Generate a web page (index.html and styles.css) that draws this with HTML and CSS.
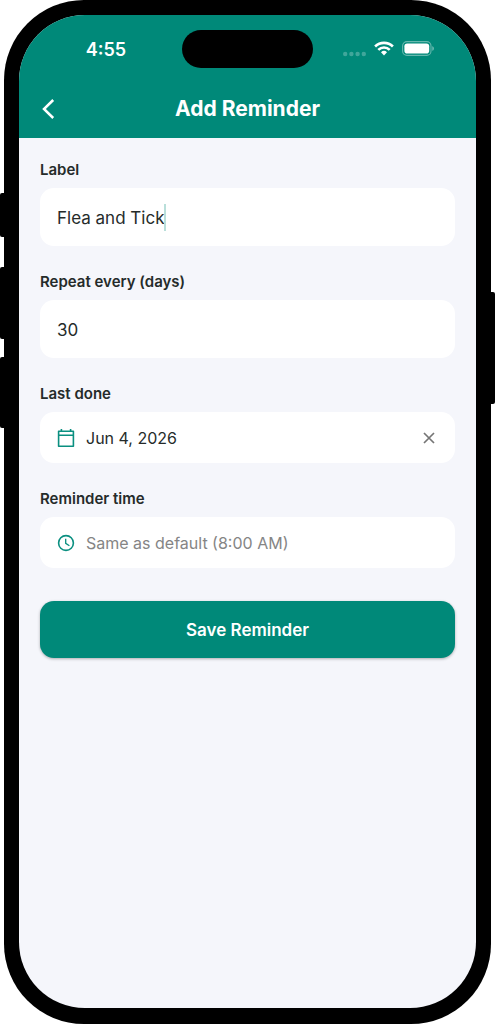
FILE: index.html
```html
<!DOCTYPE html>
<html lang="en">
<head>
<meta charset="utf-8">
<meta name="viewport" content="width=device-width, initial-scale=1">
<title>Add Reminder</title>
<link rel="stylesheet" href="styles.css">
</head>
<body>
<div class="device">
  <span class="side-key key-action"></span>
  <span class="side-key key-up"></span>
  <span class="side-key key-down"></span>
  <span class="side-key key-power"></span>
  <div class="screen">
    <header class="app-header">
      <div class="status-bar">
        <span class="clock">4:55</span>
        <span class="island"></span>
        <span class="indicators">
          <svg class="dots" width="23" height="20" viewBox="0 0 23 20"><g fill="#fff" opacity=".25"><circle cx="2.2" cy="15" r="2.2"/><circle cx="8.4" cy="15" r="2.2"/><circle cx="14.6" cy="15" r="2.2"/><circle cx="20.8" cy="15" r="2.2"/></g></svg>
          <svg width="20" height="20" viewBox="0 0 20 20"><g fill="none" stroke="#fff" stroke-width="2.6"><path d="M1.1 7.5a12.7 12.7 0 0 1 17.8 0"/><path d="M4.3 10.8a8.1 8.1 0 0 1 11.4 0"/></g><path fill="#fff" d="M7 13.2a4.5 4.5 0 0 1 6 0L10 16.6z"/></svg>
          <svg width="33" height="20" viewBox="0 0 33 20"><rect x=".6" y="2.6" width="28.4" height="13.8" rx="4.4" fill="none" stroke="#fff" stroke-width="1.1" opacity=".4"/><rect x="2.4" y="4.4" width="24.8" height="10.2" rx="2.8" fill="#fff"/><path d="M30.3 7.2v4.6c1-.4 1.6-1.2 1.6-2.3s-.6-1.9-1.6-2.3z" fill="#fff" opacity=".45"/></svg>
        </span>
      </div>
      <div class="title-bar">
        <button class="icon-button back" type="button" aria-label="Back">
          <svg width="14" height="22" viewBox="0 0 14 22"><path d="M12.2 2 3 11l9.2 9" fill="none" stroke="#fff" stroke-width="2.5"/></svg>
        </button>
        <h1 class="title">Add Reminder</h1>
      </div>
    </header>
    <form class="form">
      <div class="field">
        <label class="label" for="name">Label</label>
        <div class="box box-input">
          <input class="input input-active" id="name" type="text" value="Flea and Tick">
          <span class="caret"></span>
        </div>
      </div>
      <div class="field">
        <label class="label" for="days">Repeat every (days)</label>
        <div class="box box-input">
          <input class="input" id="days" type="text" inputmode="numeric" value="30">
        </div>
      </div>
      <div class="field">
        <label class="label" for="date">Last done</label>
        <div class="box">
          <button class="picker" id="date" type="button">
            <svg width="20" height="20" viewBox="0 0 20 20"><path d="M2.6 3.2h14.8v15H2.6zM2.6 7.2h14.8M5.4 1v2M14.6 1v2" fill="none" stroke="#0a8f80" stroke-width="1.6" stroke-linejoin="round"/></svg>
            Jun 4, 2026
          </button>
          <button class="icon-button" type="button" aria-label="Clear date">
            <svg width="20" height="20" viewBox="0 0 20 20"><path d="m5 5 10 10M15 5 5 15" stroke="#757575" stroke-width="1.7"/></svg>
          </button>
        </div>
      </div>
      <div class="field">
        <label class="label" for="time">Reminder time</label>
        <div class="box">
          <button class="picker picker-empty" id="time" type="button">
            <svg width="20" height="20" viewBox="0 0 20 20"><circle cx="10" cy="10" r="7.4" fill="none" stroke="#0a8f80" stroke-width="1.6"/><path d="M9.7 5.8v4.6l3.7 2.4" fill="none" stroke="#0a8f80" stroke-width="1.3"/></svg>
            Same as default (8:00 AM)
          </button>
        </div>
      </div>
      <button class="save" type="submit">Save Reminder</button>
    </form>
  </div>
</div>
</body>
</html>
```
FILE: styles.css
```css
* {
  box-sizing: border-box;
}

body {
  margin: 0;
  background: #fff;
  color: #252b2a;
  font-family: Inter, "Liberation Sans", sans-serif;
}

button,
input {
  border: 0;
  padding: 0;
  background: none;
  color: inherit;
  font: inherit;
}

svg {
  display: block;
  flex: none;
}

.device {
  position: relative;
  display: flex;
  min-height: 100vh;
  margin: 0 4px;
  padding: 15px 15px 16px;
  border-radius: 80px;
  background: #000;
}

.side-key {
  position: absolute;
  width: 8px;
  background: #000;
  border-radius: 2px;
}

.key-action {
  top: 193px;
  left: -4px;
  height: 44px;
}

.key-up {
  top: 267px;
  left: -4px;
  height: 72px;
}

.key-down {
  top: 357px;
  left: -4px;
  height: 71px;
}

.key-power {
  top: 292px;
  right: -4px;
  height: 112px;
}

.screen {
  flex: 1;
  min-width: 0;
  overflow: hidden;
  border-radius: 66px;
  background: #f5f6fb;
}

.app-header {
  padding-top: 15px;
  background: #008979;
  color: #fff;
}

.status-bar {
  display: grid;
  grid-template-columns: 1fr 131px 1fr;
  align-items: center;
  height: 38px;
}

.clock {
  padding: 2px 0 0 11px;
  text-align: center;
  font-size: 18px;
  line-height: 24px;
  font-weight: 600;
}

.island {
  height: 38px;
  border-radius: 19px;
  background: #000;
}

.indicators {
  display: flex;
  justify-content: center;
  gap: 8px;
  padding-right: 11px;
}

.title-bar {
  display: grid;
  grid-template-columns: 58px 1fr 58px;
  align-items: center;
  height: 70px;
  padding-top: 12px;
}

.icon-button {
  display: flex;
  justify-content: center;
  cursor: pointer;
}

.title {
  margin: 0;
  text-align: center;
  font-size: 21px;
  line-height: 28px;
  font-weight: 700;
}

.form {
  display: flex;
  flex-direction: column;
  gap: 25px;
  padding: 21px;
}

.field {
  display: flex;
  flex-direction: column;
  gap: 7px;
}

.label {
  font-size: 15px;
  line-height: 22px;
  font-weight: 600;
}

.box {
  display: flex;
  align-items: center;
  height: 51px;
  padding: 0 16px;
  border-radius: 14px;
  background: #fff;
  font-size: 16px;
  line-height: 24px;
}

.box-input {
  height: 58px;
  padding: 1px 17px 0;
  font-size: 17px;
}

.input {
  flex: 1;
  min-width: 0;
  outline: none;
}

.input-active {
  flex: none;
  field-sizing: content;
}

.caret {
  width: 2px;
  height: 27px;
  background: #b9dfda;
}

.picker {
  display: flex;
  flex: 1;
  align-items: center;
  gap: 10px;
  text-align: left;
  cursor: pointer;
}

.picker-empty {
  color: #858585;
}

.save {
  height: 57px;
  margin-top: 8px;
  border-radius: 14px;
  background: #008979;
  box-shadow: 0 1px 3px rgb(0 0 0 / 30%);
  color: #fff;
  font-size: 17px;
  font-weight: 600;
  cursor: pointer;
}
```
